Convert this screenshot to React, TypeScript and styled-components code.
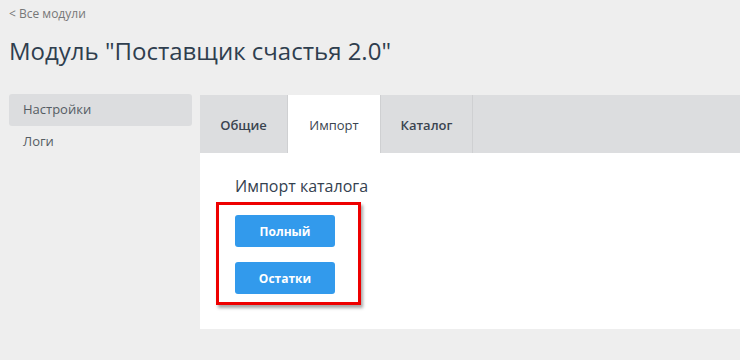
import React from "react";
import styled, { createGlobalStyle } from "styled-components";

const GlobalStyle = createGlobalStyle`
  html, body {
    margin: 0;
    padding: 0;
    background: #eeeeee;
    font-family: "Open Sans", "Liberation Sans", sans-serif;
  }
`;

const Page = styled.div`
  width: 740px;
  height: 360px;
  overflow: hidden;
  padding: 5px 0 0 9px;
  box-sizing: border-box;
`;

const BackLink = styled.a`
  display: block;
  font-size: 12px;
  line-height: 18px;
  color: #777777;
  text-decoration: none;
`;

const Title = styled.h1`
  margin: 12px 0 0;
  font-size: 24px;
  font-weight: 400;
  line-height: 32px;
  color: #2f3e4e;
`;

const Body = styled.div`
  display: flex;
  margin-top: 27px;
`;

const Sidebar = styled.nav`
  width: 183px;
  display: flex;
  flex-direction: column;
`;

const SideItem = styled.div<{ $active?: boolean }>`
  height: 32px;
  line-height: 30px;
  padding-left: 14px;
  font-size: 13px;
  color: #555c63;
  border-radius: 3px;
  background: ${({ $active }) => ($active ? "#dcdddf" : "transparent")};
`;

const Panel = styled.div`
  margin-left: 8px;
  margin-top: 1px;
  flex: 1;
  display: flex;
  flex-direction: column;
  background: #ffffff;
`;

const TabBar = styled.div`
  display: flex;
  height: 58px;
  background: #dcdddf;
`;

const Tab = styled.div<{ $active?: boolean; $w: number }>`
  width: ${({ $w }) => $w}px;
  display: flex;
  align-items: center;
  justify-content: center;
  font-size: 13px;
  font-weight: ${({ $active }) => ($active ? 400 : 600)};
  color: #3a4450;
  background: ${({ $active }) => ($active ? "#ffffff" : "transparent")};
  border-right: 1px solid #cfd0d2;
  box-sizing: border-box;
  padding-top: 1px;
`;

const Content = styled.div`
  height: 176px;
  padding: 23px 0 0 35px;
  box-sizing: border-box;
`;

const SectionTitle = styled.h2`
  margin: 0;
  font-size: 16px;
  font-weight: 400;
  line-height: 20px;
  color: #34414f;
`;

const Highlight = styled.div`
  margin: 6px 0 0 -19px;
  width: 145px;
  height: 103px;
  box-sizing: border-box;
  border: 3px solid #ee0000;
  box-shadow: 2px 3px 3px rgba(0, 0, 0, 0.35);
  padding: 10px 0 0 16px;
  display: flex;
  flex-direction: column;
  gap: 15px;
`;

const Button = styled.button`
  width: 100px;
  height: 32px;
  border: none;
  border-radius: 3px;
  background: #329aec;
  color: #ffffff;
  font-family: "Open Sans", "Liberation Sans", sans-serif;
  font-size: 12px;
  font-weight: 700;
  padding: 0;
`;

export default function App() {
  return (
    <>
      <GlobalStyle />
      <Page>
        <BackLink href="#">&lt; Все модули</BackLink>
        <Title>Модуль "Поставщик счастья 2.0"</Title>
        <Body>
          <Sidebar>
            <SideItem $active>Настройки</SideItem>
            <SideItem>Логи</SideItem>
          </Sidebar>
          <Panel>
            <TabBar>
              <Tab $w={88}>Общие</Tab>
              <Tab $w={93} $active>Импорт</Tab>
              <Tab $w={92}>Каталог</Tab>
            </TabBar>
            <Content>
              <SectionTitle>Импорт каталога</SectionTitle>
              <Highlight>
                <Button>Полный</Button>
                <Button>Остатки</Button>
              </Highlight>
            </Content>
          </Panel>
        </Body>
      </Page>
    </>
  );
}
